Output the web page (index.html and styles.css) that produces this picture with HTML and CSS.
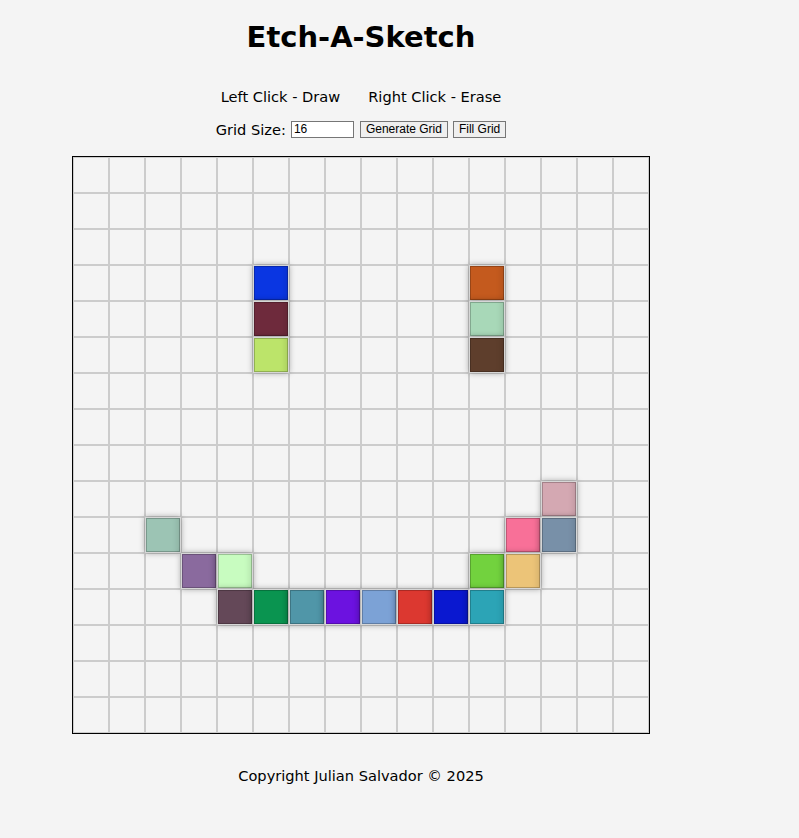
FILE: index.html
```html
<!DOCTYPE html>
<html lang="en">
<head>
<meta charset="utf-8">
<title>Etch-A-Sketch</title>
<link rel="stylesheet" href="styles.css">
</head>
<body>
<main class="app">
  <h1 class="title">Etch-A-Sketch</h1>
  <div class="instructions">
    <span>Left Click - Draw</span>
    <span>Right Click - Erase</span>
  </div>
  <div class="controls">
    <label for="size" class="size-label">Grid Size:</label>
    <input id="size" class="size-input" type="text" value="16">
    <button class="btn">Generate Grid</button>
    <button class="btn">Fill Grid</button>
  </div>
  <div class="grid" id="grid"></div>
  <footer class="footer">Copyright Julian Salvador © 2025</footer>
</main>
<script src="script.js"></script>
</body>
</html>
```

FILE: styles.css
```css
* { box-sizing: border-box; }

html, body {
  margin: 0;
  padding: 0;
  background: #f4f4f4;
}

body {
  font-family: "DejaVu Sans", Verdana, sans-serif;
  color: #000;
}

.app {
  width: 578px;
  margin-left: 72px;
  display: flex;
  flex-direction: column;
  align-items: center;
}

.title {
  margin: 18px 0 0;
  font-size: 29px;
  line-height: 38px;
  font-weight: bold;
}

.instructions {
  margin-top: 32px;
  font-size: 14.6px;
  line-height: 18px;
  display: flex;
  gap: 28px;
}

.controls {
  margin-top: 14px;
  display: flex;
  align-items: center;
  height: 18px;
  font-size: 14.6px;
}

.size-label { margin-right: 5px; }

.size-input {
  width: 63px;
  height: 17px;
  padding: 0 2px;
  border: 1px solid #767676;
  background: #fff;
  font-family: "Liberation Sans", Arial, sans-serif;
  font-size: 12px;
  margin-right: 6px;
}

.btn {
  height: 17px;
  padding: 0 5px;
  border: 1px solid #767676;
  border-radius: 0;
  background: #efefef;
  font-family: "Liberation Sans", Arial, sans-serif;
  font-size: 12px;
  line-height: 15px;
  color: #000;
  margin-right: 5px;
}
.btn:last-child { margin-right: 0; }

.grid {
  margin-top: 18px;
  width: 578px;
  height: 578px;
  border: 1px solid #000;
  display: grid;
  grid-template-columns: repeat(16, 36px);
  grid-template-rows: repeat(16, 36px);
}

.cell {
  border: 1px solid #cccccc;
  background: #f4f4f4;
}

.cell.on {
  position: relative;
  z-index: 1;
  border-color: #d6d6d6;
  box-shadow:
    0 0 6px rgba(0, 0, 0, 0.35),
    inset 0 0 0 1px rgba(0, 0, 0, 0.22),
    inset -6px 0 6px -4px rgba(0, 0, 0, 0.12);
}

.footer {
  margin-top: 33px;
  font-size: 14.6px;
  line-height: 18px;
}
```

FILE: script.js
```js
const colored = {
  "3,5": "#0a36e2", "4,5": "#6e2a3c", "5,5": "#bce46a",
  "3,11": "#c45a1e", "4,11": "#a8d8b8", "5,11": "#5e3e2c",
  "9,13": "#d4a8b2",
  "10,2": "#9cc4b4", "10,12": "#f87098", "10,13": "#7890a8",
  "11,3": "#8a6a9e", "11,4": "#c8fcc0", "11,11": "#72d23e", "11,12": "#ecc478",
  "12,4": "#644858", "12,5": "#0a9450", "12,6": "#5096a8", "12,7": "#6c12e0",
  "12,8": "#7ca2d6", "12,9": "#dc3830", "12,10": "#0a18d0", "12,11": "#2ca4b6"
};
const grid = document.getElementById("grid");
for (let r = 0; r < 16; r++) {
  for (let c = 0; c < 16; c++) {
    const d = document.createElement("div");
    d.className = "cell";
    const col = colored[r + "," + c];
    if (col) {
      d.classList.add("on");
      d.style.backgroundColor = col;
    }
    grid.appendChild(d);
  }
}
```
